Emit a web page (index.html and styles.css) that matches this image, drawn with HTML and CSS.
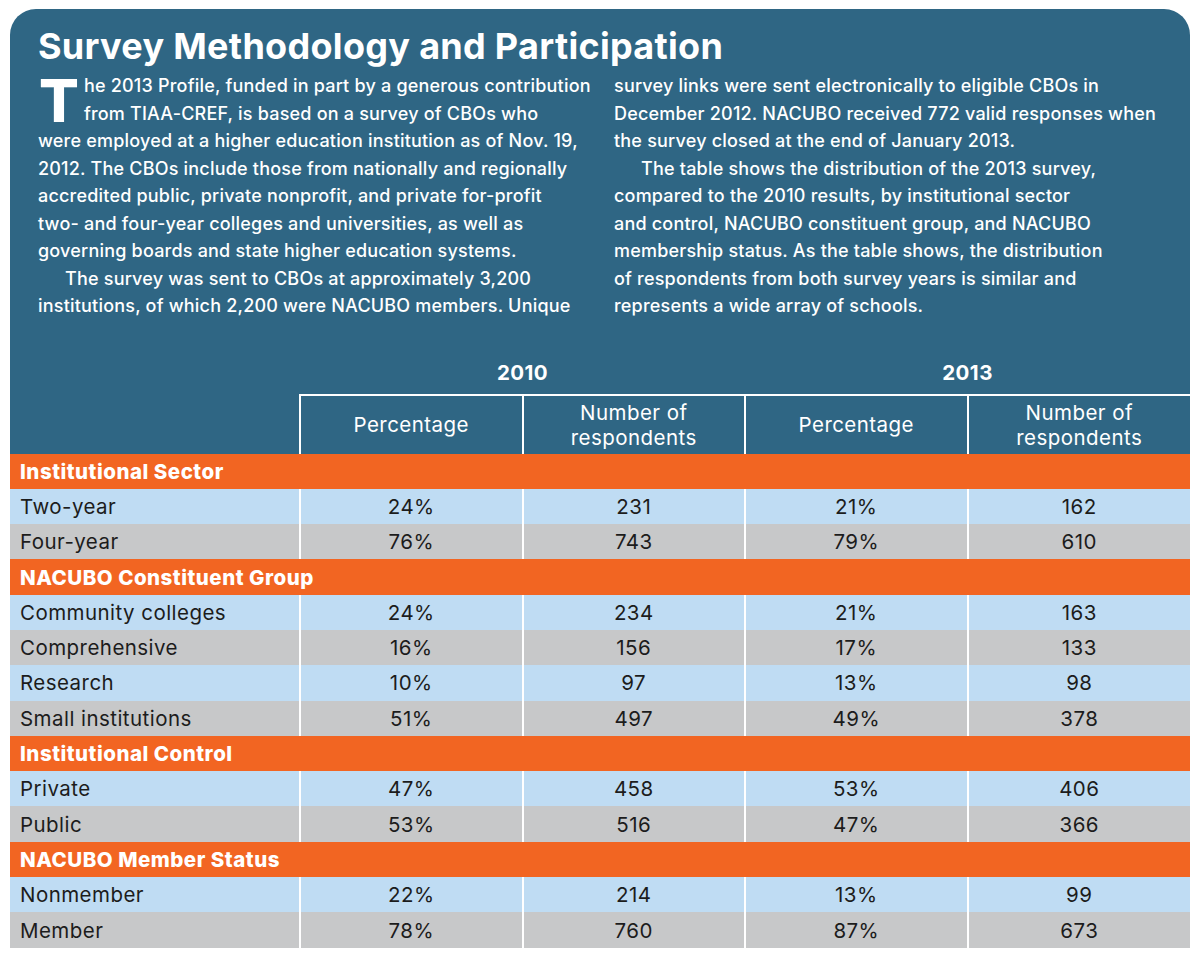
FILE: index.html
```html
<!DOCTYPE html>
<html lang="en">
<head>
<meta charset="utf-8">
<title>Survey Methodology and Participation</title>
<link rel="stylesheet" href="styles.css">
</head>
<body>
<div class="card">
  <section class="intro">
    <h1 class="title">Survey Methodology and Participation</h1>
    <div class="columns">
      <div class="col">
        <p class="para first"><span class="dropcap">T</span>he 2013 Profile, funded in part by a generous contribution<br>from TIAA-CREF, is based on a survey of CBOs who<br>were employed at a higher education institution as of Nov. 19,<br>2012. The CBOs include those from nationally and regionally<br>accredited public, private nonprofit, and private for-profit<br>two- and four-year colleges and universities, as well as<br>governing boards and state higher education systems.</p>
        <p class="para indent">The survey was sent to CBOs at approximately 3,200<br>institutions, of which 2,200 were NACUBO members. Unique</p>
      </div>
      <div class="col">
        <p class="para">survey links were sent electronically to eligible CBOs in<br>December 2012. NACUBO received 772 valid responses when<br>the survey closed at the end of January 2013.</p>
        <p class="para indent">The table shows the distribution of the 2013 survey,<br>compared to the 2010 results, by institutional sector<br>and control, NACUBO constituent group, and NACUBO<br>membership status. As the table shows, the distribution<br>of respondents from both survey years is similar and<br>represents a wide array of schools.</p>
      </div>
    </div>
  </section>

  <table class="data">
    <colgroup>
      <col class="c-label">
      <col class="c-val">
      <col class="c-val">
      <col class="c-val">
      <col class="c-val">
    </colgroup>
    <thead>
      <tr class="years">
        <th></th>
        <th colspan="2">2010</th>
        <th colspan="2">2013</th>
      </tr>
      <tr class="heads">
        <th class="blank"></th>
        <th>Percentage</th>
        <th>Number of<br>respondents</th>
        <th>Percentage</th>
        <th>Number of<br>respondents</th>
      </tr>
    </thead>
    <tbody>
      <tr class="section"><td colspan="5">Institutional Sector</td></tr>
      <tr class="blue"><td>Two-year</td><td>24%</td><td>231</td><td>21%</td><td>162</td></tr>
      <tr class="gray"><td>Four-year</td><td>76%</td><td>743</td><td>79%</td><td>610</td></tr>
      <tr class="section"><td colspan="5">NACUBO Constituent Group</td></tr>
      <tr class="blue"><td>Community colleges</td><td>24%</td><td>234</td><td>21%</td><td>163</td></tr>
      <tr class="gray"><td>Comprehensive</td><td>16%</td><td>156</td><td>17%</td><td>133</td></tr>
      <tr class="blue"><td>Research</td><td>10%</td><td>97</td><td>13%</td><td>98</td></tr>
      <tr class="gray"><td>Small institutions</td><td>51%</td><td>497</td><td>49%</td><td>378</td></tr>
      <tr class="section"><td colspan="5">Institutional Control</td></tr>
      <tr class="blue"><td>Private</td><td>47%</td><td>458</td><td>53%</td><td>406</td></tr>
      <tr class="gray"><td>Public</td><td>53%</td><td>516</td><td>47%</td><td>366</td></tr>
      <tr class="section"><td colspan="5">NACUBO Member Status</td></tr>
      <tr class="blue"><td>Nonmember</td><td>22%</td><td>214</td><td>13%</td><td>99</td></tr>
      <tr class="gray"><td>Member</td><td>78%</td><td>760</td><td>87%</td><td>673</td></tr>
    </tbody>
  </table>
</div>
</body>
</html>
```

FILE: styles.css
```css
html, body {
  margin: 0;
  padding: 0;
  background: #ffffff;
}

body {
  font-family: "Inter", "Liberation Sans", sans-serif;
}

.card {
  margin: 9px 10px 0 10px;
  width: 1180px;
  background: #2f6684;
  border-radius: 26px 26px 0 0;
  color: #ffffff;
}

.intro {
  padding: 17px 28px 21px 28px;
}

.title {
  margin: 0;
  font-size: 36px;
  line-height: 40px;
  font-weight: 700;
  letter-spacing: 0.3px;
}

.columns {
  display: grid;
  grid-template-columns: 548px 548px;
  column-gap: 28px;
  margin-top: 6px;
}

.para {
  margin: 0;
  font-size: 18px;
  line-height: 27.5px;
  font-weight: 500;
  letter-spacing: 0.2px;
  white-space: nowrap;
}

.indent {
  text-indent: 27px;
}

.dropcap {
  float: left;
  font-size: 59px;
  line-height: 46px;
  font-weight: 800;
  margin: 6px 5px 0 1px;
  letter-spacing: 0;
}

.data {
  width: 1180px;
  border-collapse: collapse;
  table-layout: fixed;
  font-size: 20.5px;
  letter-spacing: 0.45px;
}

.c-label { width: 290px; }
.c-val { width: 222.5px; }

.years th {
  height: 43px;
  padding: 0 0 10px 0;
  vertical-align: bottom;
  font-weight: 700;
  line-height: 22px;
}

.years th + th {
  border-bottom: 2px solid #ffffff;
}

.heads th {
  height: 58px;
  padding: 0;
  font-weight: 400;
  line-height: 25px;
  border-left: 2px solid #ffffff;
}

.heads th.blank {
  border-left: none;
}

tbody tr {
  height: 35.3px;
}

tbody td {
  padding: 0;
  text-align: center;
  color: #1c1c1c;
  font-weight: 400;
  border-left: 2px solid #ffffff;
}

tbody td:first-child {
  text-align: left;
  padding-left: 10px;
  border-left: none;
}

.section td {
  background: #f26522;
  color: #ffffff;
  font-weight: 800;
  letter-spacing: 0.5px;
}

.blue td { background: #bfdcf3; }
.gray td { background: #c7c8c9; }
```
